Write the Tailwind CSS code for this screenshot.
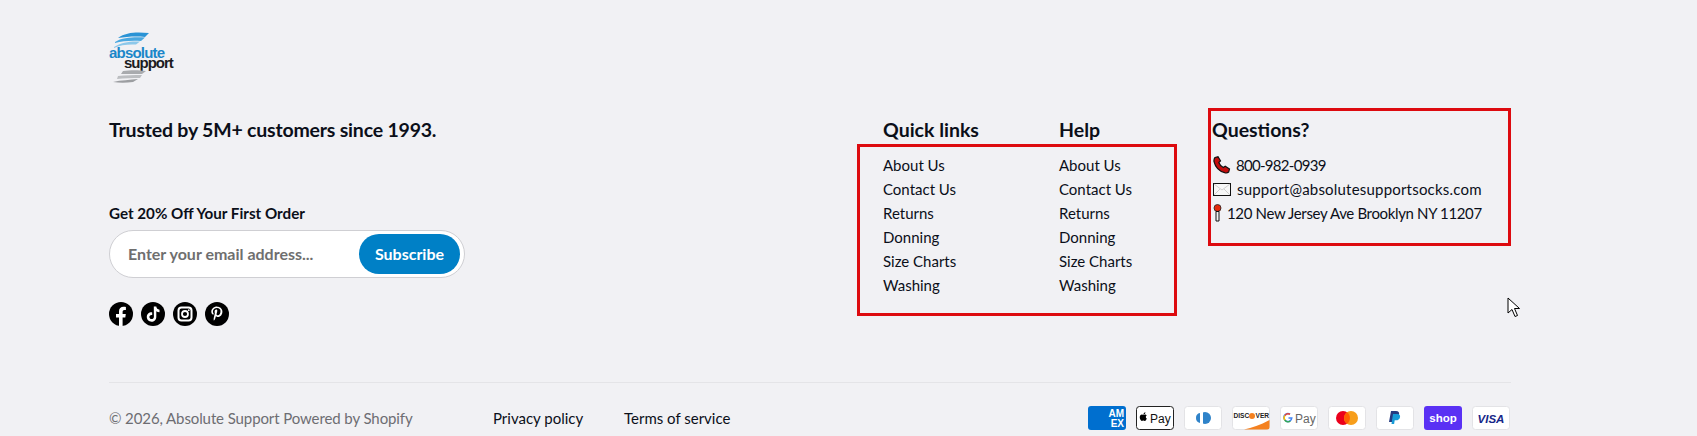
<!DOCTYPE html>
<html lang="en">
<head>
    <meta charset="UTF-8">
    <title>Absolute Support footer</title>
    <script src="https://cdn.jsdelivr.net/npm/@tailwindcss/browser@4"></script>
</head>
<body class="relative h-[436px] overflow-hidden bg-[#f1f1f4] text-[15px] leading-6 text-[#0b0f19] font-['Lato','Noto_Sans',sans-serif]">
    <footer class="pl-[109px] pr-[186px] pt-[28px]">
        <!-- logo -->
        <svg class="block" width="68" height="58" viewBox="0 0 68 58">
            <path d="M9 10C17 4 28 4 40 5L36 9C26 8 17 9 9 10Z" fill="#2a93d5"/>
            <path d="M6 14C14 9 26 9 36 9.500L32 13C22 12.500 13 13 6 15Z" fill="#4aa8e0"/>
            <path d="M5 19C12 14 22 13 31 13.500L27 16.500C19 16 11 17 5 20Z" fill="#8cc8ea"/>
            <text x="0" y="30" font-size="15" font-weight="700" letter-spacing="-.8" fill="#1b87c9" font-family="Liberation Sans">absolute</text>
            <text x="15" y="40" font-size="15" font-weight="700" letter-spacing="-1" fill="#1c1c1f" font-family="Liberation Sans">support</text>
            <path d="M14 43C21 42 30 42 37 43L33 46C25 46 19 46 12 46Z" fill="#a9abae"/>
            <path d="M9 48C17 47 25 47 33 47L31 50C23 50 15 50 8 51Z" fill="#bcbec1"/>
            <path d="M4 54C12 52 21 52 29 51L24 54C17 55 10 55 4 54Z" fill="#9c9ea1"/>
        </svg>

        <div class="mt-[29px] flex">
            <div class="w-[774px] shrink-0">
                <h2 class="text-[19.500px] leading-[30px] font-bold tracking-[-.2px]">Trusted by 5M+ customers since 1993.</h2>
                <p class="mt-[56px] text-[15.200px] font-bold leading-6">Get 20% Off Your First Order</p>
                <form class="mt-[5px] flex h-[48px] w-[356px] items-center justify-between rounded-full border border-[#cfcfd3] bg-white pl-[18px] pr-[4px]">
                    <span class="text-[16px] font-bold text-[#6f6f6f]">Enter your email address...</span>
                    <button type="button" class="h-[40px] w-[101px] rounded-full bg-[#0080c6] text-[16px] font-bold text-white">Subscribe</button>
                </form>
                <div class="mt-[24px] flex gap-2">
                    <svg width="24" height="24" viewBox="0 0 24 24"><circle cx="12" cy="12" r="12" fill="#000"/><path d="M10 24v-8.500H7V12h3V9.300C10 6.300 11.800 4.700 14.500 4.700c1.300 0 2.400.2 2.400.2v3h-1.400c-1.400 0-1.900.9-1.900 1.800V12h3.200l-.5 3.500h-2.700V24Z" fill="#fff"/></svg>
                    <svg width="24" height="24" viewBox="0 0 24 24"><circle cx="12" cy="12" r="12" fill="#000"/><path d="M12.800 4.500h2.500c.2 1.800 1.300 3 3.200 3.200v2.500c-1.200 0-2.300-.4-3.200-1v5.700c0 2.900-2.200 4.800-4.700 4.800-2.700 0-4.800-2.100-4.800-4.700 0-2.900 2.500-5 5.400-4.600v2.600c-1.400-.4-2.800.6-2.800 2 0 1.200 1 2.100 2.200 2.100 1.300 0 2.300-.9 2.300-2.400Z" fill="#fff"/></svg>
                    <svg width="24" height="24" viewBox="0 0 24 24"><circle cx="12" cy="12" r="12" fill="#000"/><rect x="5.500" y="5.500" width="13" height="13" rx="3" fill="none" stroke="#fff" stroke-width="2"/><circle cx="12" cy="12" r="3" fill="none" stroke="#fff" stroke-width="1.800"/><circle cx="15.800" cy="8.200" r=".9" fill="#fff"/></svg>
                    <svg width="24" height="24" viewBox="0 0 24 24"><circle cx="12" cy="12" r="12" fill="#000"/><path d="M12.300 4.600c-4 0-6 2.700-6 5 0 1.400.5 2.600 1.700 3.100.2.100.4 0 .4-.2l.2-.7c.1-.2 0-.3-.1-.5-.3-.4-.6-.9-.6-1.700 0-2.100 1.600-3.700 4.100-3.700 2.200 0 3.500 1.300 3.500 3.100 0 2.400-1 4.300-2.600 4.300-.9 0-1.500-.7-1.300-1.600.3-1 .7-2.100.7-2.900 0-.7-.4-1.200-1.100-1.200-.9 0-1.600.9-1.600 2.200 0 .8.3 1.300.3 1.300l-1.100 4.600c-.3 1.200 0 2.700 0 2.800 0 .1.100.1.200.1.100-.1 1.100-1.300 1.400-2.500l.6-2.200c.3.600 1.100 1.100 2 1.100 2.600 0 4.400-2.400 4.400-5.500 0-2.400-2-4.700-5.200-4.700Z" fill="#fff"/></svg>
                </div>
            </div>

            <div class="w-[176px] shrink-0">
                <h2 class="text-[19.500px] leading-[30px] font-bold">Quick links</h2>
                <ul class="mt-[8px]"><li>About Us</li><li>Contact Us</li><li>Returns</li><li>Donning</li><li>Size Charts</li><li>Washing</li></ul>
            </div>
            <div class="w-[153px] shrink-0">
                <h2 class="text-[19.500px] leading-[30px] font-bold">Help</h2>
                <ul class="mt-[8px]"><li>About Us</li><li>Contact Us</li><li>Returns</li><li>Donning</li><li>Size Charts</li><li>Washing</li></ul>
            </div>
            <div class="flex-1">
                <h2 class="text-[19.500px] leading-[30px] font-bold">Questions?</h2>
                <ul class="mt-[8px]">
                    <li class="flex items-center">
                        <svg class="ml-[1px] mr-[5px]" width="18" height="18" viewBox="0 0 18 18"><path d="M2 1.500 5 .8l2.500 4-1.700 1.700c.7 2 2.300 3.800 4.500 5l1.900-1.300 4.300 2.900-.8 2.900c-1 .9-2.600 1.200-4 .7C6 15.300 2.400 11.300 1 5.700.8 4 1.100 2.600 2 1.500Z" fill="#c40d0d" stroke="#111" stroke-width="1.200"/></svg>
                        <span class="tracking-[-.7px]">800-982-0939</span>
                    </li>
                    <li class="flex items-center">
                        <svg class="ml-[1px] mr-[6px]" width="18" height="13" viewBox="0 0 18 13"><rect x=".5" y=".5" width="17" height="12" fill="#f7f7f7" stroke="#111"/><path d="M1 1l8 6 8-6M1 12l6-6M17 12l-6-6" fill="none" stroke="#cfcfcf"/></svg>
                        <span class="tracking-[.2px]">support@absolutesupportsocks.com</span>
                    </li>
                    <li class="flex items-center">
                        <svg class="ml-[1px] mr-[5px]" width="9" height="18" viewBox="0 0 9 18"><circle cx="4.500" cy="4" r="3.500" fill="#e42a0c" stroke="#222" stroke-width=".8"/><path d="M3 7.500h3v9.500H3Z" fill="#f3f3f3" stroke="#111"/></svg>
                        <span class="tracking-[-.35px]">120 New Jersey Ave Brooklyn NY 11207</span>
                    </li>
                </ul>
            </div>
        </div>

        <div class="mt-[56px] flex items-center border-t border-[#e4e4e7] pt-[23px]">
            <p class="w-[384px] shrink-0 tracking-[-.1px] text-[#6d6d72]">© 2026, Absolute Support Powered by Shopify</p>
            <a class="w-[131px] shrink-0">Privacy policy</a>
            <a class="shrink-0">Terms of service</a>
            <ul class="ml-auto flex gap-[10px] pr-[1px]">
                <li><svg width="38" height="24" viewBox="0 0 38 24"><rect width="38" height="24" rx="3" fill="#006fcf"/><text x="36" y="11" text-anchor="end" font-size="10" font-weight="700" fill="#fff" font-family="Liberation Sans">AM</text><text x="36" y="21" text-anchor="end" font-size="10" font-weight="700" fill="#fff" font-family="Liberation Sans">EX</text></svg></li>
                <li><svg width="38" height="24" viewBox="0 0 38 24"><rect x=".5" y=".5" width="37" height="23" rx="3" fill="#fff" stroke="#222"/><path d="M10.800 9.200c-.5-.7-1.300-.8-1.600-.8-.7-.1-1.300.4-1.700.4-.4 0-.9-.4-1.500-.4-1.500 0-2.600 1.500-2.200 3.600.2 1.100 1 2.900 2 2.900.5 0 .9-.4 1.500-.4s.9.400 1.500.4c1 0 1.700-1.500 2-2.400-1.200-.5-1.400-2.400 0-3.300ZM8.900 7.800c.4-.4.600-1 .5-1.500-.5 0-1 .3-1.400.7-.3.400-.6 1-.5 1.500.5 0 1-.3 1.400-.7Z" fill="#000"/><text x="14" y="16.500" font-size="12" fill="#111" font-family="Liberation Sans">Pay</text></svg></li>
                <li><svg width="38" height="24" viewBox="0 0 38 24"><rect x=".5" y=".5" width="37" height="23" rx="3" fill="#fff" stroke="#e3e3e6"/><circle cx="21" cy="12" r="6" fill="#2f83c9"/><path d="M12 12a5 5 0 0 1 4-5v10a5 5 0 0 1-4-5Z" fill="#2f83c9"/><rect x="16" y="5" width="3" height="14" fill="#fff"/></svg></li>
                <li><svg width="38" height="24" viewBox="0 0 38 24"><rect x=".5" y=".5" width="37" height="23" rx="3" fill="#fff" stroke="#e3e3e6"/><path d="M37.500 14C28 19 20 22 12 23.500h23a2.500 2.500 0 0 0 2.500-2.500Z" fill="#f48120"/><text x="1.500" y="12" font-size="6.600" font-weight="700" fill="#222" font-family="Liberation Sans">DISC</text><circle cx="20" cy="10" r="3" fill="#f48120"/><text x="23.500" y="12" font-size="6.600" font-weight="700" fill="#222" font-family="Liberation Sans">VER</text></svg></li>
                <li><svg width="38" height="24" viewBox="0 0 38 24"><rect x=".5" y=".5" width="37" height="23" rx="3" fill="#fff" stroke="#e3e3e6"/><path d="M10 8.200A4 4 0 1 0 11.800 12H8.500" fill="none" stroke="#4285f4" stroke-width="1.500"/><path d="M5 9.500A4 4 0 0 1 10 8.200" fill="none" stroke="#ea4335" stroke-width="1.500"/><path d="M4.800 14a4 4 0 0 0 5.500 1.200" fill="none" stroke="#34a853" stroke-width="1.500"/><path d="M4.800 14a4 4 0 0 1 0-4.500" fill="none" stroke="#fbbc04" stroke-width="1.500"/><text x="15" y="16.500" font-size="12" fill="#666" font-family="Liberation Sans">Pay</text></svg></li>
                <li><svg width="38" height="24" viewBox="0 0 38 24"><rect x=".5" y=".5" width="37" height="23" rx="3" fill="#fff" stroke="#e3e3e6"/><circle cx="15" cy="12" r="7" fill="#eb001b"/><circle cx="23" cy="12" r="7" fill="#f79e1b"/><path d="M19 6.300a7 7 0 0 1 0 11.400 7 7 0 0 1 0-11.400Z" fill="#ff5f00"/></svg></li>
                <li><svg width="38" height="24" viewBox="0 0 38 24"><rect x=".5" y=".5" width="37" height="23" rx="3" fill="#fff" stroke="#e3e3e6"/><path d="M15 5h5c2.500 0 3.500 1.500 3 3.500-.5 2.200-2 3.300-4 3.300h-1.800l-.9 4.200H13Z" fill="#253b80"/><path d="M17 8h4.500c2 0 3 1.300 2.500 3.200-.5 2.200-2 3.100-3.800 3.100h-1.500l-.6 3.700H15.500Z" fill="#179bd7"/></svg></li>
                <li><svg width="38" height="24" viewBox="0 0 38 24"><rect width="38" height="24" rx="3" fill="#5a31f4"/><text x="19" y="16" text-anchor="middle" font-size="11.500" font-weight="700" fill="#fff" font-family="Liberation Sans">shop</text></svg></li>
                <li><svg width="38" height="24" viewBox="0 0 38 24"><rect x=".5" y=".5" width="37" height="23" rx="3" fill="#fff" stroke="#e3e3e6"/><text x="19" y="16.500" text-anchor="middle" font-size="11.500" font-weight="700" font-style="italic" fill="#142688" font-family="Liberation Sans">VISA</text></svg></li>
            </ul>
        </div>
    </footer>

    <!-- annotations drawn over the page -->
    <div class="absolute left-[857px] top-[144px] h-[172px] w-[320px] border-[3px] border-[#dd0a0f]"></div>
    <div class="absolute left-[1208px] top-[108px] h-[138px] w-[303px] border-[3px] border-[#dd0a0f]"></div>
    <svg class="absolute left-[1507px] top-[297px]" width="14" height="21" viewBox="0 0 14 21"><path d="M1 1v15l4-3.500 3 7 2.500-1-3-7h5Z" fill="#fff" stroke="#000"/></svg>
</body>
</html>
